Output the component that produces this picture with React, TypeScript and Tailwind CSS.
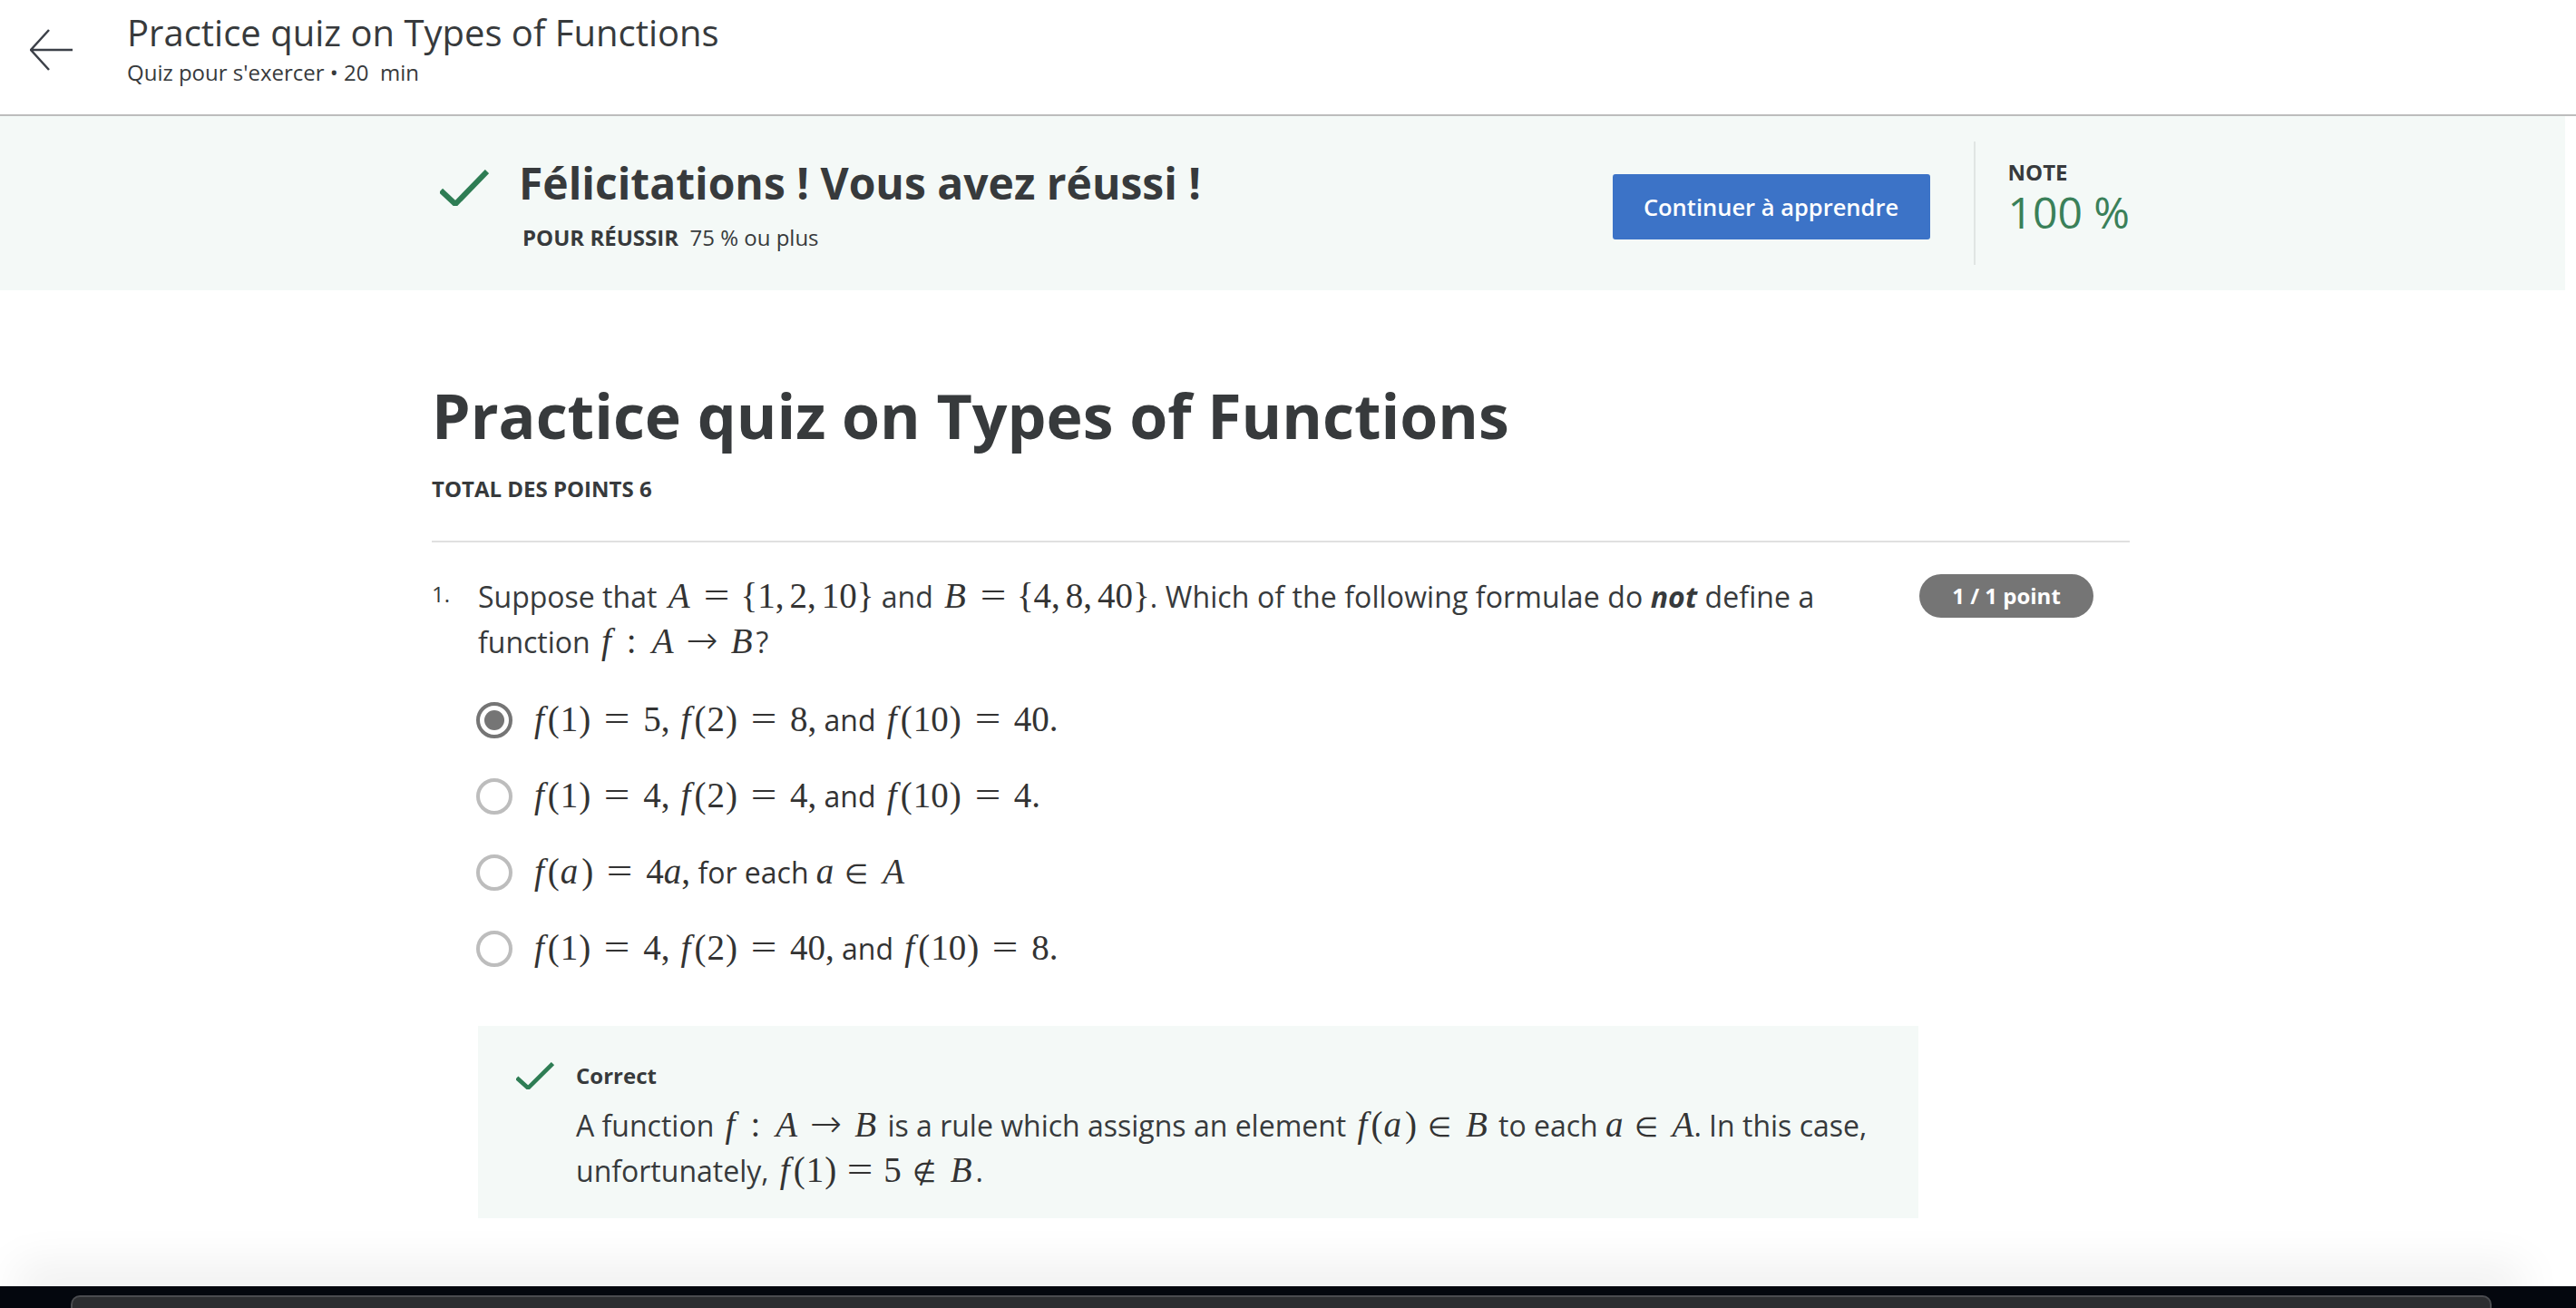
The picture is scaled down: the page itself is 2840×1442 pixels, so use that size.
import type { ReactNode } from 'react';

const SANS = "font-['Open_Sans',sans-serif]";

function M({ children }: { children: ReactNode }) {
  return (
    <span className="font-['Liberation_Serif',serif] text-[39px] leading-none text-[#333] whitespace-nowrap">
      {children}
    </span>
  );
}

// letters are wider in the reference's math face, so each gets side padding
function F() {
  return <i className="px-[4px]">f</i>;
}

function L({ children }: { children: ReactNode }) {
  return <i className="px-[4px]">{children}</i>;
}

function Eq({ tight }: { tight?: boolean }) {
  return <span className={tight ? 'mx-[15px] inline-block scale-x-[1.3]' : 'mx-[18px] inline-block scale-x-[1.3]'}>=</span>;
}

function Comma({ tight }: { tight?: boolean }) {
  return <span className={tight ? 'mr-[6px]' : 'mr-[8px]'}>,</span>;
}

function Arrow() {
  return <span className="mx-[10px] font-['DejaVu_Sans',sans-serif] text-[42px] leading-none font-extralight">→</span>;
}

function In({ not }: { not?: boolean }) {
  return <span className="mx-[12px] text-[30px]">{not ? '∉' : '∈'}</span>;
}

function Colon() {
  return <span className="mx-[13px]">:</span>;
}

function Check({ className }: { className: string }) {
  return (
    <svg viewBox="0 0 54 40" className={className} preserveAspectRatio="none">
      <path d="M1 23 L17 38 L52 2" fill="none" stroke="#2e7d54" strokeWidth="6" />
    </svg>
  );
}

function Fx({ arg }: { arg: ReactNode }) {
  return (
    <>
      <F />
      <span className="mr-px">(</span>
      {arg}
      <span className="ml-px">)</span>
    </>
  );
}

function VarA() {
  return <i className="pr-[3px]">a</i>;
}

function Radio({ selected }: { selected?: boolean }) {
  return (
    <span
      className={
        selected
          ? 'flex h-10 w-10 shrink-0 items-center justify-center rounded-full border-4 border-[#757575]'
          : 'h-10 w-10 shrink-0 rounded-full border-4 border-[#bdbdbd]'
      }
    >
      {selected && <span className="h-[22px] w-[22px] rounded-full bg-[#757575]" />}
    </span>
  );
}

function Option({ selected, children }: { selected?: boolean; children: ReactNode }) {
  return (
    <div className="-ml-[2px] flex h-[84px] items-start gap-[20px] text-[32px] text-[#333]">
      <Radio selected={selected} />
      <div className="-mt-[5px] leading-[50px]">{children}</div>
    </div>
  );
}

export default function App() {
  return (
    <div className={`${SANS} flex h-[1442px] flex-col overflow-hidden bg-white text-[#373a3c]`}>
      <header className="flex h-[128px] shrink-0 items-start border-b-2 border-[#bdbdbd]">
        <svg viewBox="0 0 48 46" className="ml-[33px] mt-[32px] h-[46px] w-[48px]">
          <path d="M21 1 L1 23 L21 45 M1 23 H47" fill="none" stroke="#3c4048" strokeWidth="2.5" />
        </svg>
        <div className="ml-[59px] mt-[8px]">
          <h1 className="text-[40px] leading-[56px] text-[#373a3c]">Practice quiz on Types of Functions</h1>
          <p className="text-[24px] leading-[31px]">Quiz pour s'exercer • 20 &nbsp;min</p>
        </div>
      </header>

      <section className="flex h-[192px] w-[2828px] shrink-0 bg-[#f4f9f7] pl-[476px]">
        <div className="flex w-[1872px]">
          <Check className="ml-[9px] mt-[59px] h-10 w-[54px] shrink-0" />
          <div className="ml-[33px] mt-[39px] flex-1">
            <h2 className="text-[48px] font-bold leading-[70px]">Félicitations ! Vous avez réussi !</h2>
            <p className="ml-[4px] mt-[9px] text-[24px] leading-[32px]">
              <b>POUR RÉUSSIR</b>&nbsp; 75 % ou plus
            </p>
          </div>
          <button className="mr-[48px] mt-[64px] h-[72px] w-[350px] rounded-[3px] bg-[#3c73c7] text-[25.5px] font-semibold text-white">
            Continuer à apprendre
          </button>
          <div className="mt-[28px] flex h-[136px] flex-col border-l-2 border-[#e0e5e3] pl-[36px] pt-[18px]">
            <span className="text-[24px] font-bold leading-[32px]">NOTE</span>
            <span className="mt-[4px] text-[48px] leading-[48px] text-[#3a8059]">100 %</span>
          </div>
        </div>
      </section>

      <main className="ml-[476px] w-[1872px] flex-1">
        <h1 className="mt-[93px] text-[68px] font-bold leading-[90px]">Practice quiz on Types of Functions</h1>
        <p className="mt-[20px] text-[24px] font-bold leading-[32px]">TOTAL DES POINTS 6</p>
        <div className="mt-[41px] border-t-2 border-[#e0e0e0]" />

        <div className="mt-[35px] flex">
          <span className="w-[51px] shrink-0 pt-[6px] text-[24px] leading-[32px]">1.</span>
          <div className="w-[1588px] shrink-0">
            <p className="text-[32px] leading-[50px]">
              Suppose that{' '}
              <M>
                <L>A</L>
                <Eq tight />{'{'}1<Comma tight />2<Comma tight />10{'}'}
              </M>{' '}
              and{' '}
              <M>
                <L>B</L>
                <Eq tight />{'{'}4<Comma tight />8<Comma tight />40{'}'}
              </M>
              <span className="tracking-[0.1px]">
                . Which of the following formulae do <b><i>not</i></b> define a
              </span>
              <br />
              function{' '}
              <M>
                <F /><Colon /><L>A</L><Arrow /><L>B</L>
              </M>
              ?
            </p>
            <div className="mt-[41px] flex flex-col">
              <Option selected>
                <M><Fx arg="1" /><Eq />5<Comma /><Fx arg="2" /><Eq />8,</M> and <M><Fx arg="10" /><Eq />40.</M>
              </Option>
              <Option>
                <M><Fx arg="1" /><Eq />4<Comma /><Fx arg="2" /><Eq />4,</M> and <M><Fx arg="10" /><Eq />4.</M>
              </Option>
              <Option>
                <M><Fx arg={<VarA />} /><Eq />4<i>a</i>,</M> for each <M><i>a</i><In /><L>A</L></M>
              </Option>
              <Option>
                <M><Fx arg="1" /><Eq />4<Comma /><Fx arg="2" /><Eq />40,</M> and <M><Fx arg="10" /><Eq />8.</M>
              </Option>
            </div>
            <div className="mt-[21px] flex h-[212px] bg-[#f4f9f7] pl-[42px] pt-[40px]">
              <Check className="h-[30px] w-[42px] shrink-0" />
              <div className="ml-[24px] -mt-[1px]">
                <p className="text-[24px] font-bold leading-[32px]">Correct</p>
                <p className="mt-[14px] text-[32px] leading-[50px]">
                  A function{' '}
                  <M><F /><Colon /><L>A</L><Arrow /><L>B</L></M>{' '}
                  is a rule which assigns an element{' '}
                  <M><Fx arg={<VarA />} /><In /><L>B</L></M> to each <M><i>a</i><In /><i className="pl-[4px]">A</i></M>. In this case,
                  <br />
                  unfortunately, <M><Fx arg="1" /><Eq tight />5<In not /><L>B</L></M>.
                </p>
              </div>
            </div>
          </div>
          <span className="ml-[1px] flex h-[48px] w-[192px] shrink-0 items-center justify-center rounded-full bg-[#757575] text-[24px] font-bold text-white">
            1 / 1 point
          </span>
        </div>
      </main>

      <footer className="relative h-[24px] shrink-0 bg-[#04070e]">
        <div className="absolute bottom-full left-[40px] right-[80px] h-px shadow-[0_0_50px_22px_rgba(0,0,0,0.07)]" />
        <div className="absolute inset-x-0 top-0 h-[24px] bg-[#04070e]" />
        <div className="absolute bottom-0 left-[78px] right-[93px] h-[14px] rounded-t-[10px] border-2 border-b-0 border-[#4b4c50] bg-[#2c2d30]" />
      </footer>
    </div>
  );
}
